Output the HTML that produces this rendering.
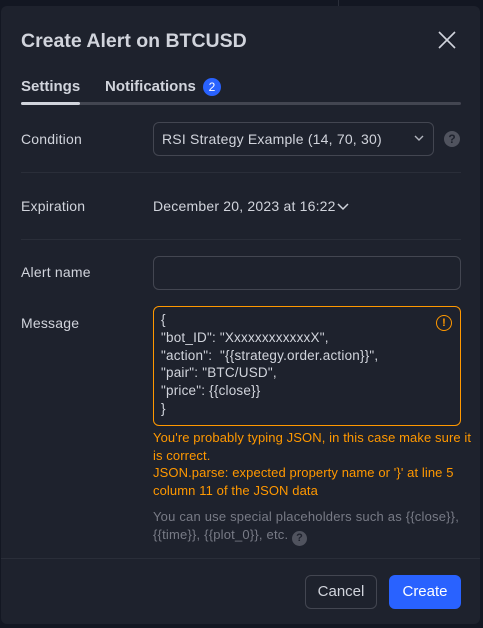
<!DOCTYPE html>
<html><head><style>
body{margin:0;width:483px;height:628px;background:#131722;overflow:hidden;font-family:"Liberation Sans",sans-serif;color:#d1d4dc;position:relative}
.a{position:absolute}
.dlg{left:1px;top:6px;width:479px;height:618px;background:#1e222d;border-radius:6px}
.lbl{font-size:14px;color:#d1d4dc;letter-spacing:0.2px}
.sep{height:1px;background:#2a2e39;left:21px;width:440px}
.box{border:1px solid #434651;border-radius:6px;box-sizing:border-box}
.or{color:#ff9800;font-size:13px;line-height:17.5px;letter-spacing:0.1px;white-space:nowrap}
</style></head><body>
<div class="a" style="left:338px;top:0;width:1px;height:6px;background:#2a2e39"></div>
<div class="a dlg"></div>
<div class="a" style="left:21px;top:30px;font-size:19.5px;font-weight:bold;color:#d1d4dc">Create Alert on BTCUSD</div>
<svg class="a" style="left:438px;top:31px" width="18" height="18"><path d="M1 1L17 17M17 1L1 17" stroke="#d1d4dc" stroke-width="1.6"/></svg>
<div class="a" style="left:21px;top:78px;font-size:15px;font-weight:bold">Settings</div>
<div class="a" style="left:105px;top:78px;font-size:15px;font-weight:bold">Notifications</div>
<div class="a" style="left:203px;top:78px;width:18px;height:18px;border-radius:9px;background:#2962ff;color:#fff;font-size:12px;text-align:center;line-height:18px">2</div>
<div class="a" style="left:21px;top:102px;width:440px;height:3px;background:#434651;border-radius:2px"></div>
<div class="a" style="left:21px;top:102px;width:59px;height:3px;background:#d1d4dc;border-radius:2px"></div>
<div class="a lbl" style="left:21px;top:131px">Condition</div>
<div class="a box" style="left:153px;top:122px;width:281px;height:34px"></div>
<div class="a lbl" style="left:162px;top:131px">RSI Strategy Example (14, 70, 30)</div>
<svg class="a" style="left:414px;top:135px" width="10" height="7"><path d="M1 1L5 5L9 1" stroke="#b2b5be" stroke-width="1.4" fill="none"/></svg>
<div class="a" style="left:444px;top:131px;width:16px;height:16px;border-radius:8px;background:#50535e;color:#1e222d;font-size:12px;font-weight:bold;text-align:center;line-height:16px">?</div>
<div class="a sep" style="top:172px"></div>
<div class="a lbl" style="left:21px;top:198px">Expiration</div>
<div class="a lbl" style="left:153px;top:198px">December 20, 2023 at 16:22</div>
<svg class="a" style="left:337px;top:203px" width="12" height="8"><path d="M1 1L6 6L11 1" stroke="#d1d4dc" stroke-width="1.5" fill="none"/></svg>
<div class="a sep" style="top:239px"></div>
<div class="a lbl" style="left:21px;top:264px">Alert name</div>
<div class="a box" style="left:153px;top:256px;width:308px;height:34px"></div>
<div class="a lbl" style="left:21px;top:315px">Message</div>
<div class="a box" style="left:153px;top:306px;width:308px;height:120px;border-color:#ff9800"></div>
<div class="a" style="left:161px;top:311px;font-size:13.5px;line-height:17.8px;color:#d1d4dc;white-space:pre;letter-spacing:0.2px">{
"bot_ID": "XxxxxxxxxxxxX",
"action":  "{{strategy.order.action}}",
"pair": "BTC/USD",
"price": {{close}}
}</div>
<div class="a" style="left:436px;top:315px;width:14px;height:14px;border:1.5px solid #ff9800;border-radius:50%;color:#ff9800;font-size:11px;font-weight:bold;text-align:center;line-height:14px">!</div>
<div class="a or" style="left:153px;top:429px">You're probably typing JSON, in this case make sure it<br>is correct.<br>JSON.parse: expected property name or '}' at line 5<br>column 11 of the JSON data</div>
<div class="a" style="left:153px;top:508px;white-space:nowrap;font-size:13px;line-height:17.5px;color:#787b86;letter-spacing:0.2px">You can use special placeholders such as {{close}},<br>{{time}}, {{plot_0}}, etc. <span style="display:inline-block;width:15px;height:15px;border-radius:8px;background:#50535e;color:#1e222d;font-size:11px;font-weight:bold;text-align:center;line-height:15px;vertical-align:-2px">?</span></div>
<div class="a" style="left:1px;top:558px;width:479px;height:1px;background:#2a2e39"></div>
<div class="a box" style="left:305px;top:575px;width:72px;height:34px;text-align:center;line-height:32px;font-size:15px">Cancel</div>
<div class="a" style="left:389px;top:575px;width:72px;height:34px;border-radius:6px;background:#2962ff;color:#fff;text-align:center;line-height:34px;font-size:15px">Create</div>
</body></html>
